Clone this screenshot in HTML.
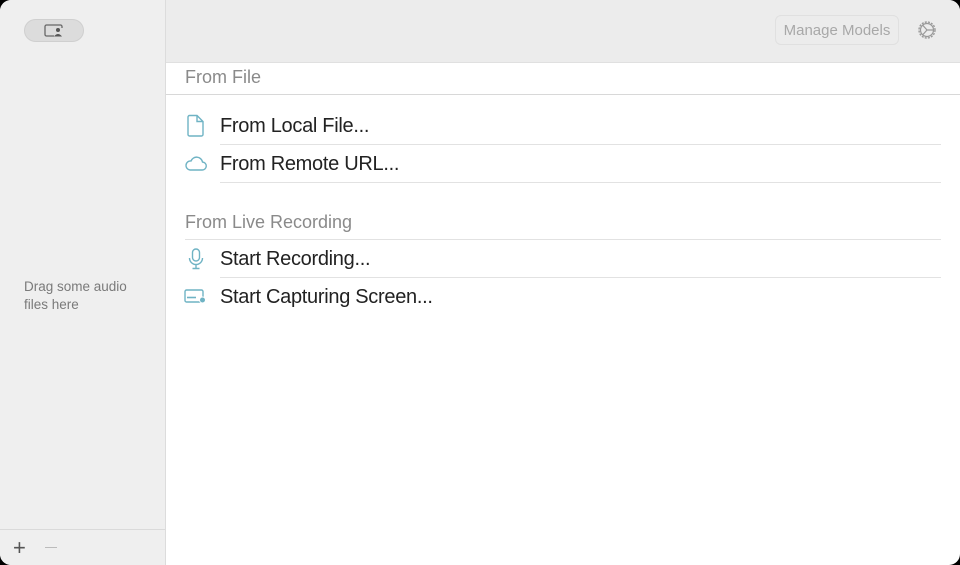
<!DOCTYPE html><html><head><style>
body{margin:0;width:960px;height:565px;background:#000;font-family:"Liberation Sans",sans-serif;overflow:hidden}
.win{position:absolute;left:0;top:0;width:960px;height:565px;border-radius:11px;overflow:hidden;background:#fff}
.side{position:absolute;left:0;top:0;width:165px;height:565px;background:#efefef;border-right:1px solid #dcdcdc}
.pill{position:absolute;left:24px;top:19px;width:60px;height:23px;border-radius:12px;background:#dcdcdc;border:1px solid #cfcfcf;box-sizing:border-box}
.drag{position:absolute;left:24px;top:278px;font-size:13.5px;line-height:18px;color:#7a7a7a}
.foot{position:absolute;left:0;top:529px;width:165px;border-top:1px solid #dadada}
.top{position:absolute;left:166px;top:0;right:0;height:62px;background:#ececec;border-bottom:1px solid #e0e0e0}
.mm{position:absolute;left:775px;top:15px;width:124px;height:30px;border:1px solid #e0e0e0;border-radius:6px;box-sizing:border-box;font-size:15px;color:#a8a8a8;text-align:center;line-height:30px}
.t{position:absolute;white-space:nowrap}
.h{font-size:18px;color:#8a8a8a}
.r{font-size:20px;color:#222;letter-spacing:-0.3px}
.ln{position:absolute;height:1px;background:#e2e2e2}
</style></head><body><div class="win">
<div class="side">
<div class="pill"><svg width="60" height="23" style="position:absolute;left:-1px;top:-1px"><rect x="21" y="6" width="17" height="11" rx="1.5" fill="none" stroke="#666" stroke-width="1.3"/><rect x="30" y="9" width="9" height="10" fill="#dcdcdc"/><circle cx="34" cy="11" r="2" fill="#555"/><path d="M30 17.5 Q34 12.5 38 17.5Z" fill="#555"/></svg></div>
<div class="drag">Drag some audio<br>files here</div>
<div class="foot"></div>
<div class="t" style="left:13px;top:536px;font-size:22px;color:#555;line-height:24px">+</div>
<div style="position:absolute;left:45px;top:547px;width:12px;height:1px;background:#bbb"></div>
</div>
<div class="top"></div>
<div class="mm">Manage Models</div>
<svg style="position:absolute;left:916px;top:19px" width="22" height="22" viewBox="0 0 22 22"><circle cx="11" cy="11" r="8" fill="none" stroke="#999" stroke-width="1.4" stroke-dasharray="2 1.2"/><circle cx="11" cy="11" r="6.5" fill="none" stroke="#999" stroke-width="1.2"/><path d="M11 11 L7 6.5 M11 11 L7 15.5 M11 11 H17" stroke="#999" stroke-width="1.2"/></svg>
<div class="t h" style="left:185px;top:67px">From File</div>
<div class="ln" style="left:166px;right:0;top:94px;background:#d8d8d8"></div>
<svg style="position:absolute;left:186px;top:114px" width="20" height="24"><path d="M2 3 a1.5 1.5 0 0 1 1.5-1.5 H11 L17 7.5 V20.5 a1.5 1.5 0 0 1-1.5 1.5 H3.5 A1.5 1.5 0 0 1 2 20.5Z M11 1.5 V7.5 H17" fill="none" stroke="#6fb3c4" stroke-width="1.4"/></svg>
<div class="t r" style="left:220px;top:115px">From Local File...</div>
<div class="ln" style="left:220px;width:721px;top:144px"></div>
<svg style="position:absolute;left:184px;top:155px" width="24" height="18"><path d="M6 15 H18 a4 4 0 0 0 0.5-8 A6 6 0 0 0 7 6 a4.5 4.5 0 0 0-1 9Z" fill="none" stroke="#6fb3c4" stroke-width="1.4"/></svg>
<div class="t r" style="left:220px;top:153px">From Remote URL...</div>
<div class="ln" style="left:220px;width:721px;top:182px"></div>
<div class="t h" style="left:185px;top:212px">From Live Recording</div>
<div class="ln" style="left:185px;width:756px;top:239px"></div>
<svg style="position:absolute;left:186px;top:247px" width="20" height="24"><rect x="6.5" y="2" width="7" height="12" rx="3.5" fill="none" stroke="#6fb3c4" stroke-width="1.4"/><path d="M3.5 11 a6.5 6.5 0 0 0 13 0 M10 17.5 V21.5 M6.5 21.5 H13.5" fill="none" stroke="#6fb3c4" stroke-width="1.4"/></svg>
<div class="t r" style="left:220px;top:248px">Start Recording...</div>
<div class="ln" style="left:220px;width:721px;top:277px"></div>
<svg style="position:absolute;left:184px;top:288px" width="24" height="18"><rect x="1" y="2" width="18" height="12" rx="1.5" fill="none" stroke="#6fb3c4" stroke-width="1.4"/><path d="M3 9.5 H12" stroke="#6fb3c4" stroke-width="1.6"/><circle cx="18.5" cy="12" r="3.5" fill="#fff"/><circle cx="18.5" cy="12" r="2.5" fill="#6fb3c4"/></svg>
<div class="t r" style="left:220px;top:286px">Start Capturing Screen...</div>
</div></body></html>
